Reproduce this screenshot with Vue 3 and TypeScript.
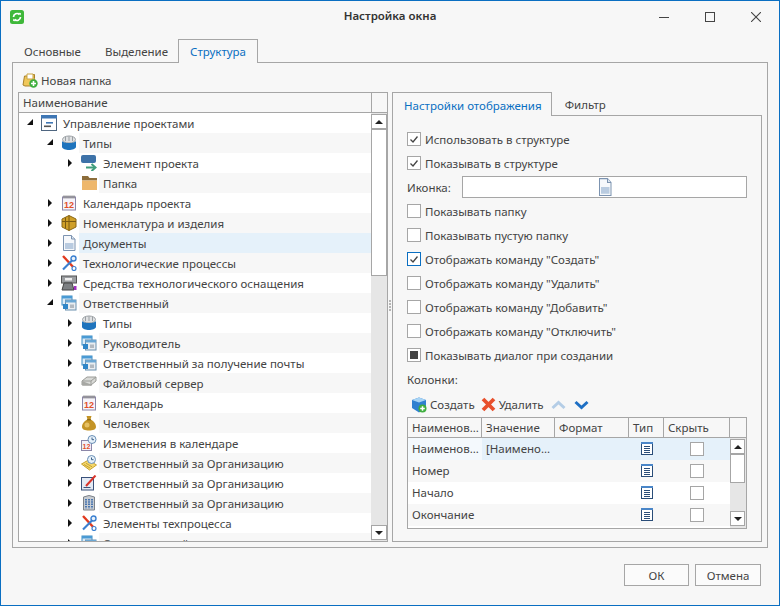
<script setup lang="ts">
interface TreeRow {
  label: string
  level: number
  icon: string
  arrow: 'open' | 'closed' | 'none'
  hover?: boolean
}

const treeRows: TreeRow[] = [
  { label: 'Управление проектами', level: 0, icon: 'project', arrow: 'open' },
  { label: 'Типы', level: 1, icon: 'jar', arrow: 'open' },
  { label: 'Элемент проекта', level: 2, icon: 'element', arrow: 'closed' },
  { label: 'Папка', level: 2, icon: 'folder', arrow: 'none' },
  { label: 'Календарь проекта', level: 1, icon: 'calendar', arrow: 'closed' },
  { label: 'Номенклатура и изделия', level: 1, icon: 'box', arrow: 'closed' },
  { label: 'Документы', level: 1, icon: 'doc', arrow: 'closed', hover: true },
  { label: 'Технологические процессы', level: 1, icon: 'tools', arrow: 'closed' },
  { label: 'Средства технологического оснащения', level: 1, icon: 'machine', arrow: 'closed' },
  { label: 'Ответственный', level: 1, icon: 'cards', arrow: 'open' },
  { label: 'Типы', level: 2, icon: 'jar', arrow: 'closed' },
  { label: 'Руководитель', level: 2, icon: 'cards', arrow: 'closed' },
  { label: 'Ответственный за получение почты', level: 2, icon: 'cards', arrow: 'closed' },
  { label: 'Файловый сервер', level: 2, icon: 'server', arrow: 'closed' },
  { label: 'Календарь', level: 2, icon: 'calendar', arrow: 'closed' },
  { label: 'Человек', level: 2, icon: 'bag', arrow: 'closed' },
  { label: 'Изменения в календаре', level: 2, icon: 'calclock', arrow: 'closed' },
  { label: 'Ответственный за Организацию', level: 2, icon: 'noteclock', arrow: 'closed' },
  { label: 'Ответственный за Организацию', level: 2, icon: 'edit', arrow: 'closed' },
  { label: 'Ответственный за Организацию', level: 2, icon: 'building', arrow: 'closed' },
  { label: 'Элементы техпроцесса', level: 2, icon: 'tools', arrow: 'closed' },
  { label: 'Ответственный', level: 2, icon: 'cards', arrow: 'closed' },
]

type CheckState = 'on' | 'off' | 'focus' | 'mixed'

const topChecks: { label: string; state: CheckState }[] = [
  { label: 'Использовать в структуре', state: 'on' },
  { label: 'Показывать в структуре', state: 'on' },
]

const bottomChecks: { label: string; state: CheckState }[] = [
  { label: 'Показывать папку', state: 'off' },
  { label: 'Показывать пустую папку', state: 'off' },
  { label: 'Отображать команду "Создать"', state: 'focus' },
  { label: 'Отображать команду "Удалить"', state: 'off' },
  { label: 'Отображать команду "Добавить"', state: 'off' },
  { label: 'Отображать команду "Отключить"', state: 'off' },
  { label: 'Показывать диалог при создании', state: 'mixed' },
]

const columns = [
  { name: 'Наименов...', value: '[Наимено...' },
  { name: 'Номер', value: '' },
  { name: 'Начало', value: '' },
  { name: 'Окончание', value: '' },
]
</script>

<template>
  <div class="window">
    <svg class="sprite" width="0" height="0">
      <symbol id="i-project" viewBox="0 0 16 16">
        <rect x="0.500" y="0.500" width="15" height="15" fill="#fff" stroke="#4f6680" />
        <rect x="0" y="0" width="16" height="3.500" fill="#3f77b5" />
        <rect x="5" y="7" width="7" height="1.600" fill="#3f77b5" />
        <rect x="3" y="10.500" width="7" height="1.600" fill="#555" />
      </symbol>
      <symbol id="i-jar" viewBox="0 0 16 16">
        <ellipse cx="8" cy="4.500" rx="6.500" ry="3.500" fill="#dfe1e3" stroke="#9a9fa3" />
        <path d="M1 6c2 2.800 12 2.800 14 0v6c-1 4-13 4-14 0z" fill="#1f74bd" />
        <path d="M4.500 2v4M8 1.500V6M11.500 2v4" stroke="#9a9fa3" />
      </symbol>
      <symbol id="i-element" viewBox="0 0 16 16">
        <rect x="0" y="0" width="15" height="8" rx="2" fill="#3d72a8" />
        <path d="M5 12.500h8" stroke="#3f9d7b" stroke-width="2" />
        <path d="M10.500 9l4 3.500-4 3.500" fill="none" stroke="#3f9d7b" stroke-width="2" />
      </symbol>
      <symbol id="i-folder" viewBox="0 0 16 16">
        <path d="M1 1h6l1.500 2H16v2.500H1z" fill="#8c6d3a" />
        <path d="M1 5.500h15v9.500H1z" fill="#eeb76c" />
      </symbol>
      <symbol id="i-calendar" viewBox="0 0 16 16">
        <rect x="1.500" y="2" width="13" height="13" fill="#f5f3fa" stroke="#8b86a8" />
        <path d="M3 0.500v3M5 0.500v3M7 0.500v3M9 0.500v3M11 0.500v3M13 0.500v3" stroke="#666" />
      </symbol>
      <symbol id="i-box" viewBox="0 0 16 16">
        <path d="M1 4l7-3.500L15 4v8l-7 3.500L1 12z" fill="#cf9f28" stroke="#8a6715" />
        <path d="M1 6.500h14M8 .5v15M4.500 2.500v11" stroke="#7a5a12" fill="none" />
      </symbol>
      <symbol id="i-doc" viewBox="0 0 16 16">
        <path d="M2.500 .5h8l3.500 3.500v11.500H2.500z" fill="#f6f8fb" stroke="#7c93b0" />
        <path d="M10.500 .5V4H14" fill="#dbe5f0" stroke="#7c93b0" />
        <rect x="4" y="8" width="8.500" height="6" fill="#b9cbe0" />
      </symbol>
      <symbol id="i-tools" viewBox="0 0 16 16">
        <path d="M2 1l12 13" stroke="#e23a1e" stroke-width="2.400" />
        <path d="M11.500 5L2 14.500" stroke="#3a7fd0" stroke-width="2.200" />
        <circle cx="12.500" cy="3.500" r="2.500" fill="#eaf3fb" stroke="#3a7fd0" stroke-width="1.400" />
        <circle cx="13" cy="13.500" r="2" fill="#fff" stroke="#3a7fd0" stroke-width="1.200" />
      </symbol>
      <symbol id="i-machine" viewBox="0 0 16 16">
        <rect x="0.500" y="1" width="15" height="7" fill="#9a9da0" stroke="#555" />
        <path d="M3 8h8l2 7H1z" fill="#7d8083" stroke="#444" />
        <rect x="4" y="3" width="7" height="2.500" fill="#eee" />
        <rect x="13" y="11" width="2.500" height="4" fill="#a12fc0" />
      </symbol>
      <symbol id="i-cards" viewBox="0 0 16 16">
        <rect x="1" y="1" width="10" height="9" fill="#dcecf8" stroke="#3f8dc4" />
        <rect x="1" y="1" width="10" height="2.500" fill="#4a9ad4" />
        <rect x="4.500" y="5" width="10.500" height="10" fill="#e9edf1" stroke="#6b90ad" />
        <rect x="4.500" y="5" width="10.500" height="2.500" fill="#6aa7d4" />
        <rect x="2" y="9" width="5" height="5" fill="#2f86c8" />
        <rect x="9" y="9.500" width="4" height="3.500" fill="#b2b9c0" />
      </symbol>
      <symbol id="i-server" viewBox="0 0 16 16">
        <path d="M1 6l5-4h9v4l-5 4-9 0z" fill="#d8d9d6" stroke="#9b9c98" />
        <path d="M1 6h9l5-4M10 6v5" fill="none" stroke="#9b9c98" />
        <path d="M1 6v3.500l1 1h8v-1z" fill="#a7a8a4" />
      </symbol>
      <symbol id="i-bag" viewBox="0 0 16 16">
        <path d="M5.500 1h5L9.500 4.600c3 1.400 5.500 4 5.500 7.400 0 2.500-3 3.500-7 3.500S1 14.500 1 12c0-3.400 2.500-6 5.500-7.400z" fill="#c49426" />
        <path d="M6 4.800h4" stroke="#7a5a10" />
        <ellipse cx="6" cy="10" rx="2.500" ry="2.500" fill="#e6c062" />
      </symbol>
      <symbol id="i-calclock" viewBox="0 0 16 16">
        <rect x="0.500" y="5.500" width="10" height="10" fill="#f3f0f7" stroke="#8b86a8" />
        <circle cx="11" cy="4.500" r="4" fill="#e6f1fa" stroke="#6a8fb5" />
        <path d="M11 2.500v2.200h2" stroke="#3a5f88" fill="none" />
      </symbol>
      <symbol id="i-noteclock" viewBox="0 0 16 16">
        <path d="M.5 9l7-4 8 5-7 5z" fill="#f4d66b" stroke="#c7a32f" />
        <path d="M3 9.500l6 3.500M5 8.300l6 3.500" stroke="#c7a32f" />
        <circle cx="10.500" cy="4.500" r="4" fill="#e6f1fa" stroke="#6a8fb5" />
        <path d="M10.500 2.500v2.200h2" stroke="#3a5f88" fill="none" />
      </symbol>
      <symbol id="i-edit" viewBox="0 0 16 16">
        <rect x="0.500" y="2.500" width="12" height="12.500" fill="#e4eaf4" stroke="#39517a" />
        <path d="M5 11L14.500 .5" stroke="#d9342b" stroke-width="2" />
        <path d="M2.500 12.500h7" stroke="#39517a" />
      </symbol>
      <symbol id="i-building" viewBox="0 0 16 16">
        <path d="M2.500 2q5.500-3 11 0v13h-11z" fill="#c7ccd2" stroke="#7d838a" />
        <path d="M5 4v9.500M8 4v9.500M11 4v9.500" stroke="#2c62a8" stroke-width="1.600" stroke-dasharray="1.500 .8" />
      </symbol>
      <symbol id="i-list" viewBox="0 0 12 13">
        <rect x="0.500" y="0.500" width="11" height="12" fill="#fff" stroke="#2a4d78" />
        <rect x="0" y="0" width="12" height="2" fill="#4a86c8" />
        <path d="M3 4.500h6M3 6.500h6M3 8.500h6M3 10.500h6" stroke="#2a4d78" />
      </symbol>
    </svg>

    <header class="titlebar">
      <svg class="app-icon" width="14" height="14" viewBox="0 0 14 14">
        <rect width="14" height="14" rx="2.500" fill="#3fb83a" />
        <path d="M3.500 7a3.500 3.500 0 0 1 6-2.400M10.500 7a3.500 3.500 0 0 1-6 2.400" fill="none" stroke="#fff" stroke-width="1.700" />
        <path d="M8.500 2.800l2.400.2-.3 2.600zM5.500 11.200l-2.400-.2.3-2.600z" fill="#fff" />
      </svg>
      <span class="title">Настройка окна</span>
      <div class="win-buttons">
        <svg width="10" height="10" viewBox="0 0 10 10"><path d="M0 5.500h10" stroke="#444" /></svg>
        <svg width="10" height="10" viewBox="0 0 10 10"><rect x=".5" y=".5" width="9" height="9" fill="none" stroke="#444" /></svg>
        <svg width="10" height="10" viewBox="0 0 10 10"><path d="M0 0l10 10M10 0L0 10" stroke="#444" stroke-width="1.100" /></svg>
      </div>
    </header>

    <nav class="main-tabs">
      <span class="tab">Основные</span>
      <span class="tab">Выделение</span>
      <span class="tab active">Структура</span>
    </nav>

    <main class="main-panel">
      <div class="left-col">
        <div class="tree-toolbar">
          <svg width="16" height="16" viewBox="0 0 16 16">
            <path d="M1 13L2.500 4h4l1-1.500 5 0v4L14 14H3z" fill="#f0c75a" stroke="#a9812a" />
            <path d="M5 2h6v5H5z" fill="#fff" stroke="#c9a545" />
            <circle cx="11.500" cy="11.500" r="4.200" fill="#3fae3f" />
            <path d="M11.500 9v5M9 11.500h5" stroke="#fff" stroke-width="1.600" />
          </svg>
          <span>Новая папка</span>
        </div>
        <section class="tree">
          <div class="tree-head">
            <span class="tree-head-title">Наименование</span>
            <span class="tree-head-gap"></span>
          </div>
          <div class="tree-body">
            <div class="tree-rows">
              <div
                v-for="(row, i) in treeRows"
                :key="i"
                class="tree-row"
                :style="{ paddingLeft: 6 + row.level * 20 + 'px' }"
              >
                <span class="arrow" :class="row.arrow"></span>
                <svg class="tree-icon" width="16" height="16" viewBox="0 0 16 16">
                  <use :href="'#i-' + row.icon" width="16" height="16" />
                  <text v-if="row.icon === 'calendar'" x="8" y="12.500" text-anchor="middle" class="cal-num">12</text>
                  <text v-if="row.icon === 'calclock'" x="5.500" y="14" text-anchor="middle" class="cal-num small">12</text>
                </svg>
                <span class="tree-label" :class="{ alt: i % 2 === 1, hover: row.hover }">{{ row.label }}</span>
              </div>
            </div>
            <div class="scrollbar tree-scroll">
              <span class="sb-btn"><i class="tri up"></i></span>
              <span class="sb-thumb tree-thumb"></span>
              <span class="sb-track"></span>
              <span class="sb-btn"><i class="tri down"></i></span>
            </div>
          </div>
        </section>
      </div>

      <div class="splitter"><i></i><i></i><i></i><i></i></div>

      <div class="right-col">
        <nav class="sub-tabs">
          <span class="sub-tab active">Настройки отображения</span>
          <span class="sub-tab">Фильтр</span>
        </nav>
        <div class="sub-panel">
          <label v-for="c in topChecks" :key="c.label" class="check-row">
            <span class="box" :class="c.state">
              <svg v-if="c.state === 'on' || c.state === 'focus'" width="12" height="12" viewBox="0 0 12 12"><path d="M2.500 6.500l2.500 2.500L9.500 3.500" fill="none" stroke="#444" stroke-width="1.300" /></svg>
            </span>
            {{ c.label }}
          </label>
          <div class="icon-row">
            <span class="icon-label">Иконка:</span>
            <div class="icon-field">
              <svg width="16" height="18" viewBox="0 0 16 16" preserveAspectRatio="none"><use href="#i-doc" width="16" height="16" /></svg>
            </div>
          </div>
          <label v-for="c in bottomChecks" :key="c.label" class="check-row">
            <span class="box" :class="c.state">
              <svg v-if="c.state === 'focus'" width="12" height="12" viewBox="0 0 12 12"><path d="M2.500 6.500l2.500 2.500L9.500 3.500" fill="none" stroke="#444" stroke-width="1.300" /></svg>
              <i v-if="c.state === 'mixed'"></i>
            </span>
            {{ c.label }}
          </label>
          <div class="columns-label">Колонки:</div>
          <div class="grid-toolbar">
            <span class="tool create">
              <svg width="16" height="16" viewBox="0 0 16 16">
                <path d="M1 3l7-2.500L15 3v8l-7 4.500L1 11z" fill="#2f80d0" />
                <path d="M1 3l7 2.500L15 3 8 .5z" fill="#a8d4f5" />
                <circle cx="11.500" cy="11.500" r="4" fill="#3fae3f" />
                <path d="M11.500 9.200v4.600M9.200 11.500h4.600" stroke="#fff" stroke-width="1.500" />
              </svg>
              Создать
            </span>
            <span class="tool remove">
              <svg width="15" height="15" viewBox="0 0 15 15"><path d="M2 2l11 11M13 2L2 13" stroke="#e8502c" stroke-width="3.800" /></svg>
              Удалить
            </span>
            <svg class="chev" width="15" height="10" viewBox="0 0 15 10"><path d="M1.500 8l6-5.500 6 5.500" fill="none" stroke="#b4cde6" stroke-width="3" /></svg>
            <svg class="chev" width="15" height="10" viewBox="0 0 15 10"><path d="M1.500 2l6 5.500 6-5.500" fill="none" stroke="#1e6fc4" stroke-width="3" /></svg>
          </div>
          <section class="grid">
            <div class="grid-head">
              <span class="c-name">Наименов...</span>
              <span class="c-value">Значение</span>
              <span class="c-format">Формат</span>
              <span class="c-type">Тип</span>
              <span class="c-hide">Скрыть</span>
              <span class="c-gap"></span>
            </div>
            <div class="grid-body">
              <div class="grid-rows">
                <div v-for="(col, i) in columns" :key="col.name" class="grid-row" :class="{ alt: i % 2 === 1, sel: i === 0 }">
                  <span class="c-name">{{ col.name }}</span>
                  <span class="c-value">{{ col.value }}</span>
                  <span class="c-format"></span>
                  <span class="c-type center"><svg class="list-icon" width="12" height="13" viewBox="0 0 12 13"><use href="#i-list" width="12" height="13" /></svg></span>
                  <span class="c-hide center"><span class="box off"></span></span>
                </div>
              </div>
              <div class="scrollbar">
                <span class="sb-btn"><i class="tri up"></i></span>
                <span class="sb-thumb grid-thumb"></span>
                <span class="sb-track"></span>
                <span class="sb-btn"><i class="tri down"></i></span>
              </div>
            </div>
          </section>
        </div>
      </div>
    </main>

    <footer class="footer">
      <button class="btn ok">ОК</button>
      <button class="btn">Отмена</button>
    </footer>
  </div>
</template>

<style>
html,
body {
  margin: 0;
  background: #f7f7f7;
}
</style>

<style scoped>
.window {
  box-sizing: border-box;
  width: 780px;
  height: 606px;
  border: 1px solid #0a6fc2;
  background: #f7f7f7;
  font-family: "Noto Sans", "Open Sans", sans-serif;
  font-size: 11.5px;
  color: #444;
  display: flex;
  flex-direction: column;
  overflow: hidden;
}
.sprite {
  position: absolute;
}

.titlebar {
  height: 30px;
  flex: none;
  display: flex;
  align-items: center;
  position: relative;
  padding-left: 9px;
}
.app-icon {
  margin-top: 2px;
}
.title {
  position: absolute;
  left: 0;
  right: 0;
  top: 7px;
  text-align: center;
  font-weight: 600;
  color: #333;
  pointer-events: none;
}
.win-buttons {
  margin-left: auto;
  display: flex;
  gap: 36px;
  padding: 2px 18px 0 0;
}
.win-buttons svg {
  display: block;
}

.main-tabs {
  height: 32px;
  flex: none;
  display: flex;
  align-items: flex-end;
  padding-left: 11px;
  box-sizing: border-box;
  margin-bottom: -1px;
  position: relative;
  z-index: 1;
}
.tab {
  height: 22px;
  line-height: 22px;
  padding: 0 12px;
}
.tab.active {
  height: 24px;
  line-height: 24px;
  margin-left: -2px;
  padding: 0 11px;
  color: #0a6fc2;
  background: #f7f7f7;
  border: 1px solid #a6a6a6;
  border-bottom: none;
  box-sizing: border-box;
}

.main-panel {
  box-sizing: border-box;
  margin: 0 11px;
  height: 486px;
  flex: none;
  border: 1px solid #a6a6a6;
  padding: 5px;
  display: flex;
}
.left-col {
  width: 370px;
  flex: none;
  display: flex;
  flex-direction: column;
}
.tree-toolbar {
  height: 24px;
  flex: none;
  display: flex;
  align-items: center;
  gap: 3px;
  padding-left: 4px;
}
.tree {
  flex: 1;
  min-height: 0;
  border: 1px solid #a6a6a6;
  display: flex;
  flex-direction: column;
  background: #fff;
}
.tree-head {
  height: 20px;
  flex: none;
  box-sizing: border-box;
  display: flex;
  background: #f7f7f7;
  border-bottom: 1px solid #a6a6a6;
}
.tree-head-title {
  flex: 1;
  line-height: 19px;
  padding-left: 4px;
  border-right: 1px solid #a6a6a6;
}
.tree-head-gap {
  width: 15px;
}
.tree-body {
  flex: 1;
  min-height: 0;
  display: flex;
}
.tree-rows {
  flex: 1;
  min-width: 0;
  overflow: hidden;
}
.tree-row {
  height: 20px;
  display: flex;
  align-items: center;
  box-sizing: border-box;
}
.arrow {
  width: 16px;
  height: 10px;
  flex: none;
  position: relative;
}
.arrow.closed::before {
  content: "";
  position: absolute;
  left: 3px;
  top: 1px;
  border-left: 4px solid #111;
  border-top: 4px solid transparent;
  border-bottom: 4px solid transparent;
}
.arrow.open::before {
  content: "";
  position: absolute;
  left: 2px;
  top: 1px;
  border-right: 6px solid #111;
  border-top: 6px solid transparent;
}
.tree-icon {
  flex: none;
}
.cal-num {
  font-family: "Liberation Sans", sans-serif;
  font-size: 9px;
  font-weight: 700;
  fill: #e2502a;
}
.cal-num.small {
  font-size: 7px;
}
.tree-label {
  flex: 1;
  height: 20px;
  line-height: 22px;
  margin-left: 2px;
  padding-left: 4px;
  white-space: nowrap;
  overflow: hidden;
}
.tree-label.alt {
  background: #f7f7f7;
}
.tree-label.hover {
  background: #e5f1fa;
}

.scrollbar {
  width: 16px;
  flex: none;
  background: #e6e6e6;
  display: flex;
  flex-direction: column;
  box-sizing: border-box;
  padding-top: 1px;
}
.tree-scroll {
  padding-bottom: 1px;
}
.sb-btn,
.sb-thumb {
  box-sizing: border-box;
  background: #fff;
  border: 1px solid #a6a6a6;
  flex: none;
}
.sb-btn {
  height: 15px;
  display: flex;
  align-items: center;
  justify-content: center;
}
.tree-thumb {
  height: 147px;
}
.grid-thumb {
  height: 29px;
}
.sb-track {
  flex: 1;
}
.tri {
  display: block;
  width: 0;
  height: 0;
  border-left: 4px solid transparent;
  border-right: 4px solid transparent;
}
.tri.up {
  border-bottom: 4px solid #222;
}
.tri.down {
  border-top: 4px solid #222;
}

.splitter {
  width: 4px;
  flex: none;
  display: flex;
  flex-direction: column;
  align-items: center;
  justify-content: center;
  gap: 1px;
}
.splitter i {
  width: 2px;
  height: 2px;
  background: #b5b5b5;
}

.right-col {
  flex: 1;
  min-width: 0;
  display: flex;
  flex-direction: column;
  padding-top: 24px;
}
.sub-tabs {
  height: 24px;
  flex: none;
  display: flex;
  margin-bottom: -1px;
  position: relative;
  z-index: 1;
}
.sub-tab {
  line-height: 25px;
  padding: 0 0 0 13px;
  height: 23px;
}
.sub-tab.active {
  height: 24px;
  color: #0a6fc2;
  border: 1px solid #a6a6a6;
  border-bottom: none;
  background: #f7f7f7;
  box-sizing: border-box;
  padding: 0 9px 0 11px;
}
.sub-panel {
  flex: 1;
  min-height: 0;
  border: 1px solid #a6a6a6;
  padding: 11px 14px 0 14px;
  box-sizing: border-box;
  display: flex;
  flex-direction: column;
}
.check-row {
  height: 24px;
  flex: none;
  display: flex;
  align-items: center;
  gap: 4px;
}
.box {
  box-sizing: border-box;
  width: 14px;
  height: 14px;
  flex: none;
  border: 1px solid #a6a6a6;
  background: #fff;
  display: flex;
  align-items: center;
  justify-content: center;
}
.box svg {
  display: block;
}
.box.focus {
  border-color: #0a6fc2;
}
.box i {
  display: block;
  width: 8px;
  height: 8px;
  background: #444;
}
.icon-row {
  height: 24px;
  flex: none;
  display: flex;
  align-items: center;
}
.icon-label {
  width: 55px;
  flex: none;
}
.icon-field {
  flex: 1;
  height: 22px;
  box-sizing: border-box;
  background: #fff;
  border: 1px solid #a6a6a6;
  display: flex;
  align-items: center;
  justify-content: center;
}
.columns-label {
  height: 24px;
  flex: none;
  line-height: 24px;
  margin-top: 1px;
}
.grid-toolbar {
  height: 25px;
  flex: none;
  display: flex;
  align-items: center;
  padding-left: 4px;
}
.tool {
  display: flex;
  align-items: center;
}
.tool.create {
  gap: 3px;
  margin-right: 6px;
}
.tool.remove {
  gap: 3px;
  margin-right: 7px;
}
.chev {
  margin-right: 8px;
}
.grid {
  box-sizing: border-box;
  width: 340px;
  height: 112px;
  border: 1px solid #a6a6a6;
  background: #fff;
  display: flex;
  flex-direction: column;
}
.grid-head {
  height: 20px;
  flex: none;
  display: flex;
  background: #f7f7f7;
  border-bottom: 1px solid #a6a6a6;
  box-sizing: border-box;
}
.grid-head > span {
  box-sizing: border-box;
  line-height: 19px;
  padding-left: 4px;
  border-right: 1px solid #a6a6a6;
  white-space: nowrap;
  overflow: hidden;
}
.grid-head > .c-gap {
  flex: 1;
  border-right: none;
}
.c-name {
  width: 74px;
  flex: none;
}
.c-value {
  width: 73px;
  flex: none;
}
.c-format {
  width: 74px;
  flex: none;
}
.c-type {
  width: 35px;
  flex: none;
}
.c-hide {
  width: 66px;
  flex: none;
}
.list-icon {
  margin-top: -2px;
}
.grid-body {
  flex: 1;
  min-height: 0;
  display: flex;
}
.grid-rows {
  flex: 1;
  min-width: 0;
}
.grid-row {
  height: 22px;
  display: flex;
  align-items: center;
}
.grid-row > span {
  box-sizing: border-box;
  padding-left: 4px;
  height: 22px;
  line-height: 22px;
  white-space: nowrap;
  overflow: hidden;
}
.grid-row > .center {
  padding-left: 0;
  display: flex;
  align-items: center;
  justify-content: center;
}
.grid-row.alt {
  background: #f7f7f7;
}
.grid-row.sel {
  background: #e5f1fa;
}
.grid-row.sel .c-name {
  background: #f4f9fd;
}
.grid .scrollbar {
  padding: 1px 1px 2px 0;
}

.footer {
  flex: 1;
  display: flex;
  justify-content: flex-end;
  align-items: flex-start;
  gap: 6px;
  padding: 16px 18px 0 0;
}
.btn {
  box-sizing: border-box;
  height: 22px;
  width: 66px;
  border: 1px solid #a6a6a6;
  background: #fbfbfb;
  font: inherit;
  color: #444;
  padding: 0;
}
.btn.ok {
  width: 65px;
}
</style>
